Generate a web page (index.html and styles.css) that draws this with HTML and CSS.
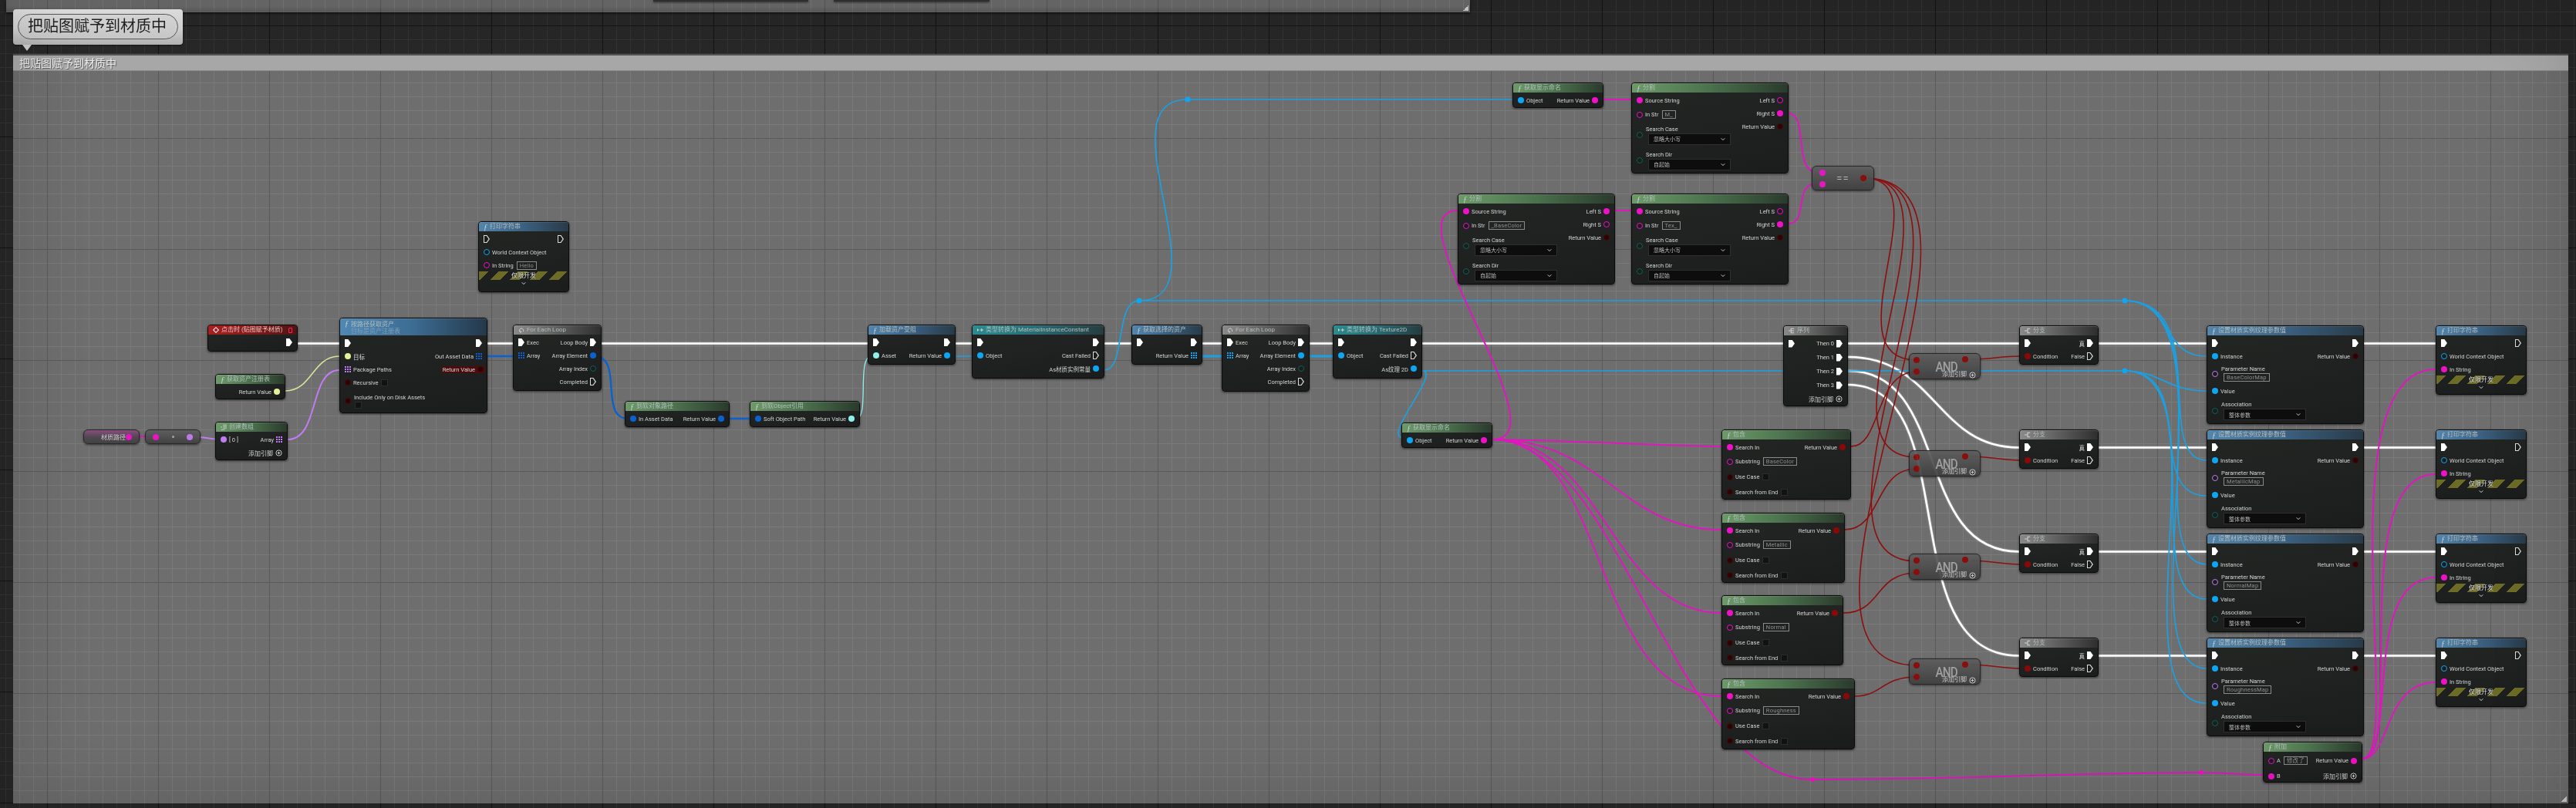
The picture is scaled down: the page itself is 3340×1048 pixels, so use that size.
FILE: index.html
```html
<!DOCTYPE html>
<html lang="zh">
<head>
<meta charset="utf-8">
<title>把贴图赋予到材质中</title>
<link rel="stylesheet" href="styles.css">
</head>
<body>
<svg class="defs" width="0" height="0" aria-hidden="true">
  <symbol id="i-chev" viewBox="0 0 8 6"><path d="M1 1.5 4 4.5 7 1.5" fill="none" stroke="currentColor" stroke-width="1.3"/></symbol>
  <symbol id="i-add" viewBox="0 0 10 10"><circle cx="5" cy="5" r="4" fill="none" stroke="currentColor" stroke-width="1"/><path d="M3 5h4M5 3v4" stroke="currentColor" stroke-width="1"/></symbol>
  <symbol id="i-loop" viewBox="0 0 10 10"><path d="M2 7.5A3.4 3.4 0 1 1 8 7.5" fill="none" stroke="currentColor" stroke-width="1.2"/><path d="M3 5.5 5.5 8 3 10z" fill="currentColor"/></symbol>
  <symbol id="i-cast" viewBox="0 0 10 8"><path d="M0 1.5 3 4 0 6.5z" fill="currentColor"/><path d="M4.5 4H10M7.2 1.5v5" stroke="currentColor" stroke-width="1.2"/></symbol>
  <symbol id="i-branch" viewBox="0 0 10 10"><path d="M0 5h4M9 1.5H5v7h4" fill="none" stroke="currentColor" stroke-width="1.3"/></symbol>
  <symbol id="i-seq" viewBox="0 0 10 10"><path d="M0 5h3M9 1.5H4v7h5M4 5h5" fill="none" stroke="currentColor" stroke-width="1.3"/></symbol>
  <symbol id="i-arr" viewBox="0 0 10 10"><path d="M0 5h2.5M4 1.5h6M4 4h6M4 6.5h6M1 9h6" fill="none" stroke="currentColor" stroke-width="1.1"/></symbol>
  <symbol id="i-ev" viewBox="0 0 10 10"><path d="M5 .8 9.2 5 5 9.2 .8 5z" fill="none" stroke="currentColor" stroke-width="1.5"/></symbol>
</svg>

<main class="canvas">
  <div class="topbar"><span class="tab tab-a"></span><span class="tab tab-b"></span><span class="corner"></span></div>
  <div class="bubble"><div class="pill">把贴图赋予到材质中</div></div>
  <section class="comment">
    <div class="comment-head">把贴图赋予到材质中</div>
    <span class="corner"></span>
  </section>

  <svg class="wires" viewBox="0 0 3340 1048" width="3340" height="1048" aria-hidden="true">
    <g class="w w-exec">
      <path d="M386 445.5H440M632 445.5H665M780 445.5H1125M1239 445.5H1260M1432 445.5H1467M1559 445.5H1584M1698 445.5H1728M1844 445.5H2312M2396 445.5H2618M2721 445.5H2861M3065 445.5H3158"/>
      <path d="M2721 580.5H2861M3065 580.5H3158M2721 715.5H2861M3065 715.5H3158M2721 850.5H2861M3065 850.5H3158"/>
      <path d="M2396 463C2510 463 2510 580.5 2618 580.5"/>
      <path d="M2396 481C2530 481 2480 715.5 2618 715.5"/>
      <path d="M2396 499C2550 499 2450 850.5 2618 850.5"/>
    </g>
    <g class="w w-sky">
      <path d="M1227 462H1260M1540 129H1961M1477 390H2755M1844 481H2755M1432 480C1460 480 1445 390 1477 390M1477 390C1590 390 1427 129 1540 129M1844 481C1870 481 1790 568 1820 568"/>
      <path class="thick" d="M1559 462H1584M1698 462H1728"/>
      <path d="M2755 390C2820 390 2800 462 2861 462"/>
      <path d="M2755 390C2870 390 2790 597 2861 597"/>
      <path d="M2755 390C2890 390 2770 732 2861 732"/>
      <path d="M2755 390C2905 390 2750 867 2861 867"/>
      <path d="M2755 481C2800 481 2810 507 2861 507"/>
      <path d="M2755 481C2850 481 2780 643 2861 643"/>
      <path d="M2755 481C2870 481 2770 777 2861 777"/>
      <path d="M2755 481C2890 481 2740 912 2861 912"/>
      <circle cx="1477" cy="390" r="3.5"/><circle cx="1540" cy="129" r="3.5"/>
      <circle cx="2755" cy="390" r="3.5"/><circle cx="2755" cy="481" r="3.5"/>
    </g>
    <g class="w w-deep">
      <path d="M632 462H665M770 462C810 462 775 543 815 543M940 543H975"/>
    </g>
    <g class="w w-mag">
      <path d="M2079 129H2115M2094 273H2115M167 566H199"/>
      <path d="M1935 570C2030 570 1800 273 1890 273"/>
      <path d="M1935 570C2000 570 2170 579 2232 579"/>
      <path d="M1935 570C2080 570 2100 687 2232 687"/>
      <path d="M1935 570C2080 570 2090 795 2232 795"/>
      <path d="M1935 570C2090 570 2060 903 2232 903"/>
      <path d="M1935 570C2100 570 2170 1011 2350 1011"/>
      <path d="M2350 1011C2550 1011 2700 1002 2854 1002C2890 1002 2900 1005 2934 1005"/>
      <path d="M2319 147C2345 147 2325 223 2355 223"/>
      <path d="M2319 290C2345 290 2325 238 2355 238"/>
      <path d="M3063 984C3120 984 3010 479 3158 479"/>
      <path d="M3063 984C3120 984 3040 615 3158 615"/>
      <path d="M3063 984C3110 984 3060 749 3158 749"/>
      <path d="M3063 984C3100 984 3090 885 3158 885"/>
      <circle cx="2350" cy="1011" r="3"/><circle cx="2854" cy="1002" r="3"/>
    </g>
    <g class="w w-red">
      <path d="M2418 231C2520 231 2370 467 2485 467"/>
      <path d="M2418 231C2560 231 2340 593 2485 593"/>
      <path d="M2418 231C2600 231 2310 728 2485 728"/>
      <path d="M2418 231C2640 231 2260 863 2485 863"/>
      <path d="M2400 579C2440 579 2430 482 2485 482"/>
      <path d="M2392 687C2440 687 2430 608 2485 608"/>
      <path d="M2390 795C2440 795 2430 743 2485 743"/>
      <path d="M2405 903C2440 903 2440 878 2485 878"/>
      <path d="M2555 466C2580 466 2595 462 2618 462M2555 592C2580 592 2595 597 2618 597M2555 727C2580 727 2595 732 2618 732M2555 862C2580 862 2595 867 2618 867"/>
    </g>
    <path class="w w-yel" d="M370 507C405 507 405 462 440 462"/>
    <path class="w w-pur" d="M373 570C415 570 400 480 440 480M247 566C265 566 270 570 288 570"/>
    <path class="w w-cyan" d="M1110 543C1128 543 1110 462 1130 462"/>
  </svg>

  <article class="node n-print0">
    <header class="head fn"><em class="fi">ƒ</em>打印字符串</header>
    <div class="body">
      <div class="row"><i class="pin ex ho"></i><i class="pin ex ho end"></i></div>
      <div class="row"><i class="pin sky ho"></i><span>World Context Object</span></div>
      <div class="row"><i class="pin mag ho"></i><span>In String</span><span class="box">Hello</span></div>
    </div>
    <div class="dev">仅限开发</div>
    <svg class="chev"><use href="#i-chev"/></svg>
  </article>

  <article class="node n-event">
    <header class="head ev"><svg class="hi"><use href="#i-ev"/></svg>点击时 (贴图赋予材质)<b class="evdot"></b></header>
    <div class="body"><div class="row"><i class="pin ex end"></i></div></div>
  </article>

  <article class="node n-getassets">
    <header class="head fn two"><div><em class="fi">ƒ</em>按路径获取资产</div><small>目标是资产注册表</small></header>
    <div class="body">
      <div class="row"><i class="pin ex"></i><i class="pin ex end"></i></div>
      <div class="row"><i class="pin yel"></i><span>目标</span><span class="end">Out Asset Data</span><i class="pin deep ar"></i></div>
      <div class="row"><i class="pin pur ar"></i><span>Package Paths</span><span class="end retval">Return Value<i class="pin red ho"></i></span></div>
      <div class="row"><i class="pin red ho"></i><span>Recursive</span><b class="chk"></b></div>
      <div class="row h-incl"><i class="pin red ho"></i><div class="stack"><span>Include Only on Disk Assets</span><b class="chk"></b></div></div>
    </div>
  </article>

  <article class="node n-loop1">
    <header class="head flow"><svg class="hi"><use href="#i-loop"/></svg>For Each Loop</header>
    <div class="body">
      <div class="row"><i class="pin ex"></i><span>Exec</span><span class="end">Loop Body</span><i class="pin ex"></i></div>
      <div class="row"><i class="pin deep ar"></i><span>Array</span><span class="end">Array Element</span><i class="pin deep"></i></div>
      <div class="row"><span class="end">Array Index</span><i class="pin teal ho"></i></div>
      <div class="row"><span class="end">Completed</span><i class="pin ex ho"></i></div>
    </div>
  </article>

  <article class="node n-getreg">
    <header class="head pure"><em class="fi">ƒ</em>获取资产注册表</header>
    <div class="body"><div class="row"><span class="end">Return Value</span><i class="pin yel"></i></div></div>
  </article>

  <article class="node n-mkarr">
    <header class="head pure"><svg class="hi"><use href="#i-arr"/></svg>创建数组</header>
    <div class="body">
      <div class="row"><i class="pin pur"></i><span>[ 0 ]</span><span class="end">Array</span><i class="pin pur ar"></i></div>
      <div class="row"><span class="end cjk">添加引脚</span><svg class="addi"><use href="#i-add"/></svg></div>
    </div>
  </article>

  <article class="node compact n-var"><span class="end cjk">材质路径</span><i class="pin mag"></i></article>
  <article class="node compact n-conv"><i class="pin mag"></i><b class="dot"></b><i class="pin pur"></i></article>

  <article class="node n-softpath">
    <header class="head pure"><em class="fi">ƒ</em>到软对象路径</header>
    <div class="body"><div class="row"><i class="pin deep"></i><span>In Asset Data</span><span class="end">Return Value</span><i class="pin deep"></i></div></div>
  </article>
  <article class="node n-softref">
    <header class="head pure"><em class="fi">ƒ</em>到软Object引用</header>
    <div class="body"><div class="row"><i class="pin deep"></i><span>Soft Object Path</span><span class="end">Return Value</span><i class="pin cyan"></i></div></div>
  </article>

  <article class="node n-load">
    <header class="head fn"><em class="fi">ƒ</em>加载资产受阻</header>
    <div class="body">
      <div class="row"><i class="pin ex"></i><i class="pin ex end"></i></div>
      <div class="row"><i class="pin cyan"></i><span>Asset</span><span class="end">Return Value</span><i class="pin sky"></i></div>
    </div>
  </article>
  <article class="node n-cast1">
    <header class="head cast"><svg class="hi"><use href="#i-cast"/></svg>类型转换为 MaterialInstanceConstant</header>
    <div class="body">
      <div class="row"><i class="pin ex"></i><i class="pin ex end"></i></div>
      <div class="row"><i class="pin sky"></i><span>Object</span><span class="end">Cast Failed</span><i class="pin ex ho"></i></div>
      <div class="row"><span class="end">As材质实例常量</span><i class="pin sky"></i></div>
    </div>
  </article>
  <article class="node n-getsel">
    <header class="head fn"><em class="fi">ƒ</em>获取选择的资产</header>
    <div class="body">
      <div class="row"><i class="pin ex"></i><i class="pin ex end"></i></div>
      <div class="row"><span class="end">Return Value</span><i class="pin sky ar"></i></div>
    </div>
  </article>
  <article class="node n-loop2">
    <header class="head flow"><svg class="hi"><use href="#i-loop"/></svg>For Each Loop</header>
    <div class="body">
      <div class="row"><i class="pin ex"></i><span>Exec</span><span class="end">Loop Body</span><i class="pin ex"></i></div>
      <div class="row"><i class="pin sky ar"></i><span>Array</span><span class="end">Array Element</span><i class="pin sky"></i></div>
      <div class="row"><span class="end">Array Index</span><i class="pin teal ho"></i></div>
      <div class="row"><span class="end">Completed</span><i class="pin ex ho"></i></div>
    </div>
  </article>
  <article class="node n-cast2">
    <header class="head cast"><svg class="hi"><use href="#i-cast"/></svg>类型转换为 Texture2D</header>
    <div class="body">
      <div class="row"><i class="pin ex"></i><i class="pin ex end"></i></div>
      <div class="row"><i class="pin sky"></i><span>Object</span><span class="end">Cast Failed</span><i class="pin ex ho"></i></div>
      <div class="row"><span class="end">As纹理 2D</span><i class="pin sky"></i></div>
    </div>
  </article>

  <article class="node n-name2">
    <header class="head pure"><em class="fi">ƒ</em>获取显示命名</header>
    <div class="body"><div class="row"><i class="pin sky"></i><span>Object</span><span class="end">Return Value</span><i class="pin mag"></i></div></div>
  </article>
  <article class="node n-name1">
    <header class="head pure"><em class="fi">ƒ</em>获取显示命名</header>
    <div class="body"><div class="row"><i class="pin sky"></i><span>Object</span><span class="end">Return Value</span><i class="pin mag"></i></div></div>
  </article>

  <article class="node n-splita">
    <header class="head pure"><em class="fi">ƒ</em>分割</header>
    <div class="body cols">
      <div class="col">
        <div class="row"><i class="pin mag"></i><span>Source String</span></div>
        <div class="row h-20"><i class="pin mag ho"></i><span>In Str</span><span class="box">M_</span></div>
        <div class="row h-33"><i class="pin teal ho"></i><div class="stack"><span>Search Case</span><div class="drop"><span>忽略大小写</span><svg class="chev-d"><use href="#i-chev"/></svg></div></div></div>
        <div class="row h-33"><i class="pin teal ho"></i><div class="stack"><span>Search Dir</span><div class="drop"><span>自起始</span><svg class="chev-d"><use href="#i-chev"/></svg></div></div></div>
      </div>
      <div class="col">
        <div class="row"><span class="end">Left S</span><i class="pin mag ho"></i></div>
        <div class="row"><span class="end">Right S</span><i class="pin mag"></i></div>
        <div class="row"><span class="end">Return Value</span><i class="pin red ho"></i></div>
      </div>
    </div>
  </article>
  <article class="node n-splitb">
    <header class="head pure"><em class="fi">ƒ</em>分割</header>
    <div class="body cols">
      <div class="col">
        <div class="row"><i class="pin mag"></i><span>Source String</span></div>
        <div class="row h-20"><i class="pin mag ho"></i><span>In Str</span><span class="box">_BaseColor</span></div>
        <div class="row h-33"><i class="pin teal ho"></i><div class="stack"><span>Search Case</span><div class="drop"><span>忽略大小写</span><svg class="chev-d"><use href="#i-chev"/></svg></div></div></div>
        <div class="row h-33"><i class="pin teal ho"></i><div class="stack"><span>Search Dir</span><div class="drop"><span>自起始</span><svg class="chev-d"><use href="#i-chev"/></svg></div></div></div>
      </div>
      <div class="col">
        <div class="row"><span class="end">Left S</span><i class="pin mag"></i></div>
        <div class="row"><span class="end">Right S</span><i class="pin mag ho"></i></div>
        <div class="row"><span class="end">Return Value</span><i class="pin red ho"></i></div>
      </div>
    </div>
  </article>
  <article class="node n-splitc">
    <header class="head pure"><em class="fi">ƒ</em>分割</header>
    <div class="body cols">
      <div class="col">
        <div class="row"><i class="pin mag"></i><span>Source String</span></div>
        <div class="row h-20"><i class="pin mag ho"></i><span>In Str</span><span class="box">Tex_</span></div>
        <div class="row h-33"><i class="pin teal ho"></i><div class="stack"><span>Search Case</span><div class="drop"><span>忽略大小写</span><svg class="chev-d"><use href="#i-chev"/></svg></div></div></div>
        <div class="row h-33"><i class="pin teal ho"></i><div class="stack"><span>Search Dir</span><div class="drop"><span>自起始</span><svg class="chev-d"><use href="#i-chev"/></svg></div></div></div>
      </div>
      <div class="col">
        <div class="row"><span class="end">Left S</span><i class="pin mag ho"></i></div>
        <div class="row"><span class="end">Right S</span><i class="pin mag"></i></div>
        <div class="row"><span class="end">Return Value</span><i class="pin red ho"></i></div>
      </div>
    </div>
  </article>

  <article class="node compact n-eq">
    <div class="pins"><i class="pin mag"></i><i class="pin mag"></i></div>
    <b class="eq">==</b>
    <i class="pin red"></i>
  </article>

  <article class="node n-seq">
    <header class="head flow"><svg class="hi"><use href="#i-seq"/></svg>序列</header>
    <div class="body">
      <div class="row h-18"><i class="pin ex"></i><span class="end">Then 0</span><i class="pin ex"></i></div>
      <div class="row h-18"><span class="end">Then 1</span><i class="pin ex"></i></div>
      <div class="row h-18"><span class="end">Then 2</span><i class="pin ex"></i></div>
      <div class="row h-18"><span class="end">Then 3</span><i class="pin ex"></i></div>
      <div class="row h-18"><span class="end cjk">添加引脚</span><svg class="addi"><use href="#i-add"/></svg></div>
    </div>
  </article>

  <article class="node and and-1"><div class="pins"><i class="pin red"></i><i class="pin red"></i></div><b class="and-t">AND</b><i class="pin red out"></i><div class="and-add"><span class="cjk">添加引脚</span><svg class="addi"><use href="#i-add"/></svg></div></article>
  <article class="node and and-2"><div class="pins"><i class="pin red"></i><i class="pin red"></i></div><b class="and-t">AND</b><i class="pin red out"></i><div class="and-add"><span class="cjk">添加引脚</span><svg class="addi"><use href="#i-add"/></svg></div></article>
  <article class="node and and-3"><div class="pins"><i class="pin red"></i><i class="pin red"></i></div><b class="and-t">AND</b><i class="pin red out"></i><div class="and-add"><span class="cjk">添加引脚</span><svg class="addi"><use href="#i-add"/></svg></div></article>
  <article class="node and and-4"><div class="pins"><i class="pin red"></i><i class="pin red"></i></div><b class="and-t">AND</b><i class="pin red out"></i><div class="and-add"><span class="cjk">添加引脚</span><svg class="addi"><use href="#i-add"/></svg></div></article>

  <article class="node br br-1"><header class="head flow"><svg class="hi"><use href="#i-branch"/></svg>分支</header><div class="body"><div class="row"><i class="pin ex"></i><span class="end">真</span><i class="pin ex"></i></div><div class="row"><i class="pin red"></i><span>Condition</span><span class="end">False</span><i class="pin ex ho"></i></div></div></article>
  <article class="node br br-2"><header class="head flow"><svg class="hi"><use href="#i-branch"/></svg>分支</header><div class="body"><div class="row"><i class="pin ex"></i><span class="end">真</span><i class="pin ex"></i></div><div class="row"><i class="pin red"></i><span>Condition</span><span class="end">False</span><i class="pin ex ho"></i></div></div></article>
  <article class="node br br-3"><header class="head flow"><svg class="hi"><use href="#i-branch"/></svg>分支</header><div class="body"><div class="row"><i class="pin ex"></i><span class="end">真</span><i class="pin ex"></i></div><div class="row"><i class="pin red"></i><span>Condition</span><span class="end">False</span><i class="pin ex ho"></i></div></div></article>
  <article class="node br br-4"><header class="head flow"><svg class="hi"><use href="#i-branch"/></svg>分支</header><div class="body"><div class="row"><i class="pin ex"></i><span class="end">真</span><i class="pin ex"></i></div><div class="row"><i class="pin red"></i><span>Condition</span><span class="end">False</span><i class="pin ex ho"></i></div></div></article>

  <article class="node ct ct-1"><header class="head pure"><em class="fi">ƒ</em>包含</header><div class="body">
    <div class="row"><i class="pin mag"></i><span>Search In</span><span class="end">Return Value</span><i class="pin red"></i></div>
    <div class="row h-20"><i class="pin mag ho"></i><span>Substring</span><span class="box">BaseColor</span></div>
    <div class="row h-20"><i class="pin red ho"></i><span>Use Case</span><b class="chk"></b></div>
    <div class="row h-19"><i class="pin red ho"></i><span>Search from End</span><b class="chk"></b></div>
  </div></article>
  <article class="node ct ct-2"><header class="head pure"><em class="fi">ƒ</em>包含</header><div class="body">
    <div class="row"><i class="pin mag"></i><span>Search In</span><span class="end">Return Value</span><i class="pin red"></i></div>
    <div class="row h-20"><i class="pin mag ho"></i><span>Substring</span><span class="box">Metallic</span></div>
    <div class="row h-20"><i class="pin red ho"></i><span>Use Case</span><b class="chk"></b></div>
    <div class="row h-19"><i class="pin red ho"></i><span>Search from End</span><b class="chk"></b></div>
  </div></article>
  <article class="node ct ct-3"><header class="head pure"><em class="fi">ƒ</em>包含</header><div class="body">
    <div class="row"><i class="pin mag"></i><span>Search In</span><span class="end">Return Value</span><i class="pin red"></i></div>
    <div class="row h-20"><i class="pin mag ho"></i><span>Substring</span><span class="box">Normal</span></div>
    <div class="row h-20"><i class="pin red ho"></i><span>Use Case</span><b class="chk"></b></div>
    <div class="row h-19"><i class="pin red ho"></i><span>Search from End</span><b class="chk"></b></div>
  </div></article>
  <article class="node ct ct-4"><header class="head pure"><em class="fi">ƒ</em>包含</header><div class="body">
    <div class="row"><i class="pin mag"></i><span>Search In</span><span class="end">Return Value</span><i class="pin red"></i></div>
    <div class="row h-20"><i class="pin mag ho"></i><span>Substring</span><span class="box">Roughness</span></div>
    <div class="row h-20"><i class="pin red ho"></i><span>Use Case</span><b class="chk"></b></div>
    <div class="row h-19"><i class="pin red ho"></i><span>Search from End</span><b class="chk"></b></div>
  </div></article>

  <article class="node st st-1"><header class="head fn"><em class="fi">ƒ</em>设置材质实例纹理参数值</header><div class="body">
    <div class="row"><i class="pin ex"></i><i class="pin ex end"></i></div>
    <div class="row"><i class="pin sky"></i><span>Instance</span><span class="end">Return Value</span><i class="pin red ho"></i></div>
    <div class="row h-28"><i class="pin pur ho"></i><div class="stack"><span>Parameter Name</span><span class="box">BaseColorMap</span></div></div>
    <div class="row"><i class="pin sky"></i><span>Value</span></div>
    <div class="row h-34"><i class="pin teal ho"></i><div class="stack"><span>Association</span><div class="drop"><span>整体参数</span><svg class="chev-d"><use href="#i-chev"/></svg></div></div></div>
  </div></article>
  <article class="node st st-2"><header class="head fn"><em class="fi">ƒ</em>设置材质实例纹理参数值</header><div class="body">
    <div class="row"><i class="pin ex"></i><i class="pin ex end"></i></div>
    <div class="row"><i class="pin sky"></i><span>Instance</span><span class="end">Return Value</span><i class="pin red ho"></i></div>
    <div class="row h-28"><i class="pin pur ho"></i><div class="stack"><span>Parameter Name</span><span class="box">MetallicMap</span></div></div>
    <div class="row"><i class="pin sky"></i><span>Value</span></div>
    <div class="row h-34"><i class="pin teal ho"></i><div class="stack"><span>Association</span><div class="drop"><span>整体参数</span><svg class="chev-d"><use href="#i-chev"/></svg></div></div></div>
  </div></article>
  <article class="node st st-3"><header class="head fn"><em class="fi">ƒ</em>设置材质实例纹理参数值</header><div class="body">
    <div class="row"><i class="pin ex"></i><i class="pin ex end"></i></div>
    <div class="row"><i class="pin sky"></i><span>Instance</span><span class="end">Return Value</span><i class="pin red ho"></i></div>
    <div class="row h-28"><i class="pin pur ho"></i><div class="stack"><span>Parameter Name</span><span class="box">NormalMap</span></div></div>
    <div class="row"><i class="pin sky"></i><span>Value</span></div>
    <div class="row h-34"><i class="pin teal ho"></i><div class="stack"><span>Association</span><div class="drop"><span>整体参数</span><svg class="chev-d"><use href="#i-chev"/></svg></div></div></div>
  </div></article>
  <article class="node st st-4"><header class="head fn"><em class="fi">ƒ</em>设置材质实例纹理参数值</header><div class="body">
    <div class="row"><i class="pin ex"></i><i class="pin ex end"></i></div>
    <div class="row"><i class="pin sky"></i><span>Instance</span><span class="end">Return Value</span><i class="pin red ho"></i></div>
    <div class="row h-28"><i class="pin pur ho"></i><div class="stack"><span>Parameter Name</span><span class="box">RoughnessMap</span></div></div>
    <div class="row"><i class="pin sky"></i><span>Value</span></div>
    <div class="row h-34"><i class="pin teal ho"></i><div class="stack"><span>Association</span><div class="drop"><span>整体参数</span><svg class="chev-d"><use href="#i-chev"/></svg></div></div></div>
  </div></article>

  <article class="node pr pr-1"><header class="head fn"><em class="fi">ƒ</em>打印字符串</header><div class="body">
    <div class="row"><i class="pin ex"></i><i class="pin ex ho end"></i></div>
    <div class="row"><i class="pin sky ho"></i><span>World Context Object</span></div>
    <div class="row"><i class="pin mag"></i><span>In String</span></div>
  </div><div class="dev">仅限开发</div><svg class="chev"><use href="#i-chev"/></svg></article>
  <article class="node pr pr-2"><header class="head fn"><em class="fi">ƒ</em>打印字符串</header><div class="body">
    <div class="row"><i class="pin ex"></i><i class="pin ex ho end"></i></div>
    <div class="row"><i class="pin sky ho"></i><span>World Context Object</span></div>
    <div class="row"><i class="pin mag"></i><span>In String</span></div>
  </div><div class="dev">仅限开发</div><svg class="chev"><use href="#i-chev"/></svg></article>
  <article class="node pr pr-3"><header class="head fn"><em class="fi">ƒ</em>打印字符串</header><div class="body">
    <div class="row"><i class="pin ex"></i><i class="pin ex ho end"></i></div>
    <div class="row"><i class="pin sky ho"></i><span>World Context Object</span></div>
    <div class="row"><i class="pin mag"></i><span>In String</span></div>
  </div><div class="dev">仅限开发</div><svg class="chev"><use href="#i-chev"/></svg></article>
  <article class="node pr pr-4"><header class="head fn"><em class="fi">ƒ</em>打印字符串</header><div class="body">
    <div class="row"><i class="pin ex"></i><i class="pin ex ho end"></i></div>
    <div class="row"><i class="pin sky ho"></i><span>World Context Object</span></div>
    <div class="row"><i class="pin mag"></i><span>In String</span></div>
  </div><div class="dev">仅限开发</div><svg class="chev"><use href="#i-chev"/></svg></article>

  <article class="node n-append"><header class="head pure"><em class="fi">ƒ</em>附加</header><div class="body">
    <div class="row h-20"><i class="pin mag ho"></i><span>A</span><span class="box">修改了</span><span class="end">Return Value</span><i class="pin mag"></i></div>
    <div class="row h-20"><i class="pin mag"></i><span>B</span><span class="end cjk">添加引脚</span><svg class="addi"><use href="#i-add"/></svg></div>
  </div></article>

  <div class="vignette"></div>
</main>
</body>
</html>
```
FILE: styles.css
```css
* { box-sizing: border-box; }
html, body { margin: 0; padding: 0; background: #282828; }
.defs { position: absolute; }

.canvas {
  position: relative;
  width: 3340px;
  height: 1048px;
  overflow: hidden;
  filter: blur(.35px);
  font-family: Roboto, "Noto Sans CJK SC", sans-serif;
  font-size: 7.5px;
  color: #d2d2d2;
  background-color: #282828;
  background-image:
    linear-gradient(90deg, #131313 1px, transparent 1px),
    linear-gradient(#131313 1px, transparent 1px),
    linear-gradient(90deg, #343434 1px, transparent 1px),
    linear-gradient(#343434 1px, transparent 1px);
  background-size: 144px 144px, 144px 144px, 18px 18px, 18px 18px;
  background-position: 61px 0, 0 33px, 7px 0, 0 15px;
}

/* comment boxes */
.topbar, .comment {
  position: absolute;
  background-color: #6e6e6e;
  background-image:
    linear-gradient(90deg, #5a5a5a 1px, transparent 1px),
    linear-gradient(#5a5a5a 1px, transparent 1px),
    linear-gradient(90deg, #7a7a7a 1px, transparent 1px),
    linear-gradient(#7a7a7a 1px, transparent 1px);
  background-size: 144px 144px, 144px 144px, 18px 18px, 18px 18px;
}
.topbar {
  left: 8px; top: 0; width: 1898px; height: 16px;
  background-position: 53px 0, 0 33px, 17px 0, 0 15px;
  box-shadow: 0 1px 3px rgba(0, 0, 0, .8), inset 0 -6px 6px -3px rgba(0, 0, 0, .22);
}
.tab { position: absolute; top: 0; height: 2px; background: #333; box-shadow: 0 1px 3px rgba(0, 0, 0, .7); }
.tab-a { left: 839px; width: 201px; }
.tab-b { left: 1073px; width: 202px; }
.corner {
  position: absolute; right: 2px; bottom: 2px;
  width: 7px; height: 7px;
  background: linear-gradient(135deg, transparent 50%, #cfcfcf 50%);
}
.comment {
  left: 17px; top: 70px; width: 3313px; height: 972px;
  background-position: 44px 0, 0 107px, 8px 0, 0 17px;
  border-top: 2px solid #565656;
}
.comment-head {
  height: 20px;
  padding-left: 8px;
  background: #a9a9a9;
  border-bottom: 1px solid #8f8f8f;
  color: #eee;
  font-size: 14px;
  line-height: 20px;
  text-shadow: 1px 1px 1px #555;
}
.bubble {
  position: absolute; left: 17px; top: 12px; width: 220px; height: 46px;
  padding: 6px 6px;
  border-radius: 4px;
  background: linear-gradient(#ececec, #d9d9d9 55%, #b5b5b5);
  box-shadow: 0 1px 2px rgba(0, 0, 0, .5);
}
.bubble::after {
  content: "";
  position: absolute; left: 12px; top: 100%;
  border: 6px solid transparent;
  border-top: 8px solid #d0d0d0;
  border-bottom: 0;
}
.pill {
  height: 33px;
  border: 1.5px solid #5c5c5c;
  border-radius: 17px;
  padding-left: 12px;
  background: linear-gradient(#e2e2e2, #cdcdcd);
  color: #222;
  font-size: 20px;
  line-height: 30px;
  white-space: nowrap;
}

/* wires */
.wires { position: absolute; left: 0; top: 0; }
.w { fill: none; }
.w circle { stroke: none; }
.w-exec { stroke: #fff; stroke-width: 2.6; filter: drop-shadow(0 0 1px rgba(255, 255, 255, .45)); }
.w-sky { stroke: #1ba0e2; stroke-width: 1.7; }
.w-sky circle { fill: #0ea6f2; }
.w-sky .thick { stroke-width: 3.2; }
.w-deep { stroke: #0a62d0; stroke-width: 2.4; }
.w-mag { stroke: #e016bf; stroke-width: 2; }
.w-mag circle { fill: #f010c8; }
.w-red { stroke: #8c1010; stroke-width: 1.6; }
.w-yel { stroke: #d8e498; stroke-width: 1.6; }
.w-pur { stroke: #c07cf0; stroke-width: 2; }
.w-cyan { stroke: #8ff0ea; stroke-width: 1.3; }

/* node shell */
.node {
  position: absolute;
  border: 1px solid #0b0b0b;
  border-radius: 4px;
  background: linear-gradient(170deg, #232724, #1b1d1c);
  box-shadow: 0 1px 3px rgba(0, 0, 0, .6);
  white-space: nowrap;
}
.head {
  display: flex;
  align-items: center;
  height: 12px;
  padding-left: 6px;
  border-radius: 3px 3px 0 0;
  font-size: 8px;
  line-height: 12px;
  color: #b4bebe;
  overflow: hidden;
}
.fn { background: linear-gradient(90deg, #5485ac, #3d6486 45%, #283a48); box-shadow: inset 0 1px rgba(255,255,255,.12); }
.pure { background: linear-gradient(90deg, #6e9a6a, #4e7650 45%, #2a3a2c); box-shadow: inset 0 1px rgba(255,255,255,.12); }
.cast { background: linear-gradient(90deg, #2a8c90, #286a72 50%, #263c40); box-shadow: inset 0 1px rgba(255,255,255,.12); }
.flow { background: linear-gradient(90deg, #8a8a8a, #5e5e5e 50%, #2e2e2e); box-shadow: inset 0 1px rgba(255,255,255,.15); }
.ev { background: linear-gradient(90deg, #a82020, #7c1818 60%, #4c1414); color: #e4c4c4; }
.two { display: block; height: 22px; padding-top: 1px; background: linear-gradient(90deg, #4f88b4, #3c6c92 50%, #24384a); }
.two div { height: 11px; line-height: 11px; }
.two small { display: block; font-size: 8px; line-height: 9px; color: #7fa0b8; padding-left: 8px; }
.fi { font: italic 10px "Liberation Serif", serif; margin-right: 3px; color: #c8d4d4; }
.hi { width: 8px; height: 8px; margin-right: 3px; color: #d4d4d4; flex: none; }
.evdot { margin-left: auto; margin-right: 6px; width: 5px; height: 7px; border: 1.5px solid #f25; border-radius: 1px; }

.body { padding: 1.5px 6px 0; }
.row { display: flex; align-items: center; gap: 3px; height: 17px; }
.h-18 { height: 18px; }
.h-19 { height: 19px; }
.h-20 { height: 20px; }
.h-28 { height: 28px; }
.h-33 { height: 33px; }
.h-34 { height: 34px; }
.h-incl { height: 31px; }
.stack { display: flex; flex-direction: column; align-items: flex-start; gap: 1px; padding-left: 1px; }
.end { margin-left: auto; }
.cjk { font-size: 8px; }
.cols { display: flex; justify-content: space-between; }
.col { flex: 1; }
.col:last-child { flex: none; width: 60px; }

.box {
  display: inline-block;
  height: 11px;
  padding: 0 3px;
  border: 1px solid #8a8a8a;
  color: #8e8e8e;
  font-size: 7.5px;
  line-height: 9px;
  letter-spacing: .2px;
  margin-left: 1px;
}
.stack .box { margin-left: 3px; }
.chk { width: 9px; height: 9px; background: #121212; border: 1px solid #2c2c2c; margin-left: 1px; }
.drop {
  display: flex; align-items: center; justify-content: space-between;
  width: 107px; height: 15px;
  margin-left: 3px; padding: 0 6px;
  background: #0d0d0d;
  border: 1px solid #2e2e2e;
  font-size: 7px;
  color: #b8b8b8;
}
.chev-d { width: 6px; height: 5px; color: #cfcfcf; }
.retval { display: flex; align-items: center; gap: 3px; padding: 0 2px 0 1px; background: #4c0c0c; border-radius: 2px; color: #d4d4d4; margin-right: -4px; }
.dev {
  height: 11px;
  margin-top: -1px;
  text-align: center;
  line-height: 11px;
  font-size: 8px;
  color: #e8e8e8;
  text-shadow: 0 0 1px #000;
  background: repeating-linear-gradient(135deg, #6c6c26 0 9px, #1d201e 9px 18px);
}
.chev { display: block; width: 6px; height: 5px; margin: 2px auto 0; color: #ddd; }
.addi { width: 9px; height: 9px; color: #ddd; flex: none; }

/* pins */
.pin {
  position: relative;
  flex: none;
  display: block;
  width: 8px;
  height: 8px;
  border-radius: 50%;
  color: #888;
  background: currentColor;
}
.sky { color: #0ea6f2; }
.deep { color: #0a62d0; }
.mag { color: #f010c8; }
.red { color: #8c0808; }
.yel { color: #e2f09a; }
.cyan { color: #8ff0ea; }
.teal { color: #10a080; }
.pur { color: #c07cf0; }
.pin.ho { background: #1b1d1c; border: 1.5px solid currentColor; }
.red.ho { color: #4a0606; background: #2a0404; }
.teal.ho { color: #0c5f58; }
.pin.ar {
  border-radius: 0;
  background-image:
    linear-gradient(90deg, transparent 2px, #1b1d1c 2px),
    linear-gradient(transparent 2px, #1b1d1c 2px);
  background-size: 3px 3px;
}
.pin.ex {
  width: 8px;
  height: 10px;
  border-radius: 0;
  border: 0;
  background: #fff;
  clip-path: polygon(0 0, 55% 0, 100% 50%, 55% 100%, 0 100%);
}
.pin.ex.ho { background: #ddd; }
.pin.ex.ho::after {
  content: "";
  position: absolute; inset: 1px 1.5px 1px 1px;
  background: #1b1d1c;
  clip-path: polygon(0 0, 50% 0, 100% 50%, 50% 100%, 0 100%);
}

/* compact nodes */
.compact, .and {
  background: linear-gradient(#5d5d5d, #3f3f3f);
  border-color: #222;
  border-radius: 6px;
  opacity: .93;
}
.compact { display: flex; align-items: center; padding: 0 9px; }
.n-var { background: linear-gradient(#8a4a82, #4c464c 55%, #3f3f3f); }
.dot { width: 3px; height: 3px; margin: 0 auto; background: #aaa; border-radius: 50%; }
.pins { display: flex; flex-direction: column; gap: 7px; }
.eq { flex: 1; text-align: center; font: 400 13px/1 Roboto, sans-serif; color: #bbb; letter-spacing: 1px; }
.and {
  display: grid;
  grid-template-columns: 13px 1fr 9px;
  grid-template-rows: 22.5px 9.5px;
  padding-left: 5px; padding-right: 8px;
}
.and .pins { grid-row: 1 / 3; padding-top: 4px; }
.and-t {
  grid-column: 2; grid-row: 1;
  align-self: end; justify-self: center;
  font: 500 18px/13px Roboto, sans-serif;
  letter-spacing: -1px;
  color: #a4a4a4;
  transform: scaleX(.85);
  margin-left: 4px;
}
.out { grid-column: 3; grid-row: 1; margin-top: 3px; margin-left: -6px; }
.and-add {
  grid-column: 2 / 4; grid-row: 2;
  display: flex; align-items: center; justify-content: flex-end; gap: 3px;
  height: 9px;
  line-height: 8px;
  margin-right: -3px;
}

/* node positions on the blueprint canvas */
.n-print0 { left: 620px; top: 287px; width: 118px; height: 92px; }
.n-event { left: 269px; top: 421px; width: 117px; height: 35px; }
.n-getassets { left: 440px; top: 412px; width: 192px; height: 124px; }
.n-loop1 { left: 665px; top: 421px; width: 115px; height: 86px; }
.n-getreg { left: 279px; top: 485px; width: 91px; height: 33px; }
.n-mkarr { left: 279px; top: 547px; width: 94px; height: 50px; }
.n-var { left: 108px; top: 557px; width: 73px; height: 19px; }
.n-conv { left: 188px; top: 557px; width: 72px; height: 19px; }
.n-softpath { left: 810px; top: 520px; width: 136px; height: 34px; }
.n-softref { left: 972px; top: 520px; width: 143px; height: 34px; }
.n-load { left: 1125px; top: 421px; width: 114px; height: 52px; }
.n-cast1 { left: 1260px; top: 421px; width: 172px; height: 70px; }
.n-getsel { left: 1467px; top: 421px; width: 92px; height: 52px; }
.n-loop2 { left: 1584px; top: 421px; width: 114px; height: 87px; }
.n-cast2 { left: 1728px; top: 421px; width: 116px; height: 70px; }
.n-name2 { left: 1817px; top: 548px; width: 118px; height: 33px; }
.n-name1 { left: 1961px; top: 107px; width: 118px; height: 33px; }
.n-splita { left: 2115px; top: 107px; width: 204px; height: 118px; }
.n-splitb { left: 1890px; top: 251px; width: 204px; height: 118px; }
.n-splitc { left: 2115px; top: 251px; width: 204px; height: 118px; }
.n-eq { left: 2349px; top: 215px; width: 81px; height: 32px; }
.n-seq { left: 2312px; top: 422px; width: 84px; height: 105px; }
.and { left: 2475px; width: 93px; height: 34px; }
.and-1 { top: 458px; }
.and-2 { top: 584px; }
.and-3 { top: 718px; }
.and-4 { top: 854px; }
.br { left: 2618px; width: 103px; height: 51px; }
.br-1 { top: 422px; }
.br-2 { top: 557px; }
.br-3 { top: 692px; }
.br-4 { top: 827px; }
.ct { left: 2232px; height: 91px; }
.ct-1 { top: 557px; width: 168px; }
.ct-2 { top: 665px; width: 160px; }
.ct-3 { top: 772px; width: 158px; }
.ct-4 { top: 880px; width: 173px; height: 92px; }
.st { left: 2861px; width: 204px; height: 128px; }
.st-1 { top: 422px; }
.st-2 { top: 557px; }
.st-3 { top: 692px; }
.st-4 { top: 827px; }
.pr { left: 3158px; width: 118px; height: 90px; }
.pr-1 { top: 422px; }
.pr-2 { top: 557px; }
.pr-3 { top: 692px; }
.pr-4 { top: 827px; }
.n-append { left: 2934px; top: 962px; width: 129px; height: 53px; }

.vignette {
  position: absolute; inset: 0;
  pointer-events: none;
  box-shadow: inset 0 0 110px rgba(0, 0, 0, .18);
}
```
